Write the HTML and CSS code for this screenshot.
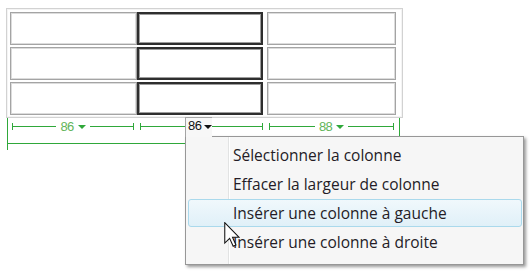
FILE: index.html
```html
<!DOCTYPE html>
<html lang="fr">
<head>
<meta charset="utf-8">
<title>Colonne</title>
<link rel="stylesheet" href="styles.css">
</head>
<body>
<div class="page">
  <div class="tbl">
    <div class="row"><div class="cell c1"></div><div class="cell c2"></div><div class="cell c3"></div></div>
    <div class="row"><div class="cell c1"></div><div class="cell c2"></div><div class="cell c3"></div></div>
    <div class="row"><div class="cell c1"></div><div class="cell c2"></div><div class="cell c3"></div></div>
  </div>
  <div class="ruler">
    <div class="ruler-body">
      <div class="seg s1"><span class="tick"></span><span class="line"></span><span class="lbl">86<i class="arr"></i></span><span class="line"></span><span class="tick"></span></div>
      <div class="seg s2"><span class="tick"></span><span class="line"></span><span class="tick"></span></div>
      <div class="seg s3"><span class="tick"></span><span class="line"></span><span class="lbl">88<i class="arr"></i></span><span class="line"></span><span class="tick"></span></div>
    </div>
  </div>

  <div class="menu">
    <div class="item">Sélectionner la colonne</div>
    <div class="item">Effacer la largeur de colonne</div>
    <div class="item hot">Insérer une colonne à gauche</div>
    <div class="item">Insérer une colonne à droite</div>
  </div>
  <div class="tab">86<i class="arr dark"></i></div>

  <svg class="cursor" width="16" height="25" viewBox="0 0 12 19" xmlns="http://www.w3.org/2000/svg">
    <path d="M0.5 0.5 L0.5 16 L4.2 12.4 L6.9 18.4 L9 17.5 L6.4 11.6 L11.4 11.6 Z" fill="#fff" stroke="#111" stroke-width="0.8" stroke-linejoin="miter"/>
  </svg>
</div>
</body>
</html>
```
FILE: styles.css
```css
html, body {
  margin: 0;
  padding: 0;
  background: #ffffff;
}
.page {
  position: relative;
  width: 531px;
  height: 271px;
  overflow: hidden;
  padding-top: 8px;
  box-sizing: border-box;
  font-family: "Open Sans", "Noto Sans", sans-serif;
}
.tbl {
  margin-left: 6px;
  width: 390px;
  border: 1px solid #d2d2d2;
  box-shadow: inset 0 0 0 1px #f4f4f4;
  padding: 3px 2px 2px 3px;
  display: flex;
  flex-direction: column;
  gap: 2px;
}
.row {
  display: flex;
  height: 33px;
}
.cell {
  box-sizing: border-box;
  height: 33px;
  border: 1px solid #a4a4a4;
  box-shadow: inset 0 0 0 1px #dcdcdc;
  background: #fff;
}
.c1 { width: 127px; }
.c2 {
  width: 126px;
  border: 2px solid #2e2e2e;
  box-shadow: inset 0 0 0 1px #9c9c9c;
}
.c3 { width: 129px; margin-left: 4px; }

.ruler {
  margin-left: 7px;
  width: 392px;
  border-left: 1px solid #2fa83a;
  padding-bottom: 6px;
}
.ruler-body {
  height: 26px;
  border-right: 1px solid #2fa83a;
  border-bottom: 1px solid #2fa83a;
  display: flex;
  align-items: flex-start;
  padding-top: 5px;
  box-sizing: border-box;
}
.seg {
  display: flex;
  align-items: center;
  height: 7px;
}
.s1 { margin-left: 4px; width: 122px; }
.s2 { margin-left: 6px; width: 123px; }
.s3 { margin-left: 6px; width: 125px; }
.tick {
  width: 1px;
  height: 7px;
  background: #2fa83a;
}
.line {
  flex: 1;
  height: 1px;
  background: #2fa83a;
}
.lbl {
  display: flex;
  align-items: center;
  gap: 4px;
  margin: 0 4px;
  font-family: "Liberation Sans", Arial, sans-serif;
  font-size: 13px;
  line-height: 10px;
  letter-spacing: -0.6px;
  color: #62b55a;
}
.arr {
  display: inline-block;
  width: 0;
  height: 0;
  border-left: 4px solid transparent;
  border-right: 4px solid transparent;
  border-top: 4px solid #2fa83a;
}
.arr.dark { border-top-color: #111; }

.tab {
  position: absolute;
  left: 185px;
  top: 117px;
  width: 27px;
  height: 20px;
  box-sizing: border-box;
  border-top: 1px solid #a4a4a4;
  border-left: 1px solid #a4a4a4;
  background: #f7f7f7;
  padding: 2px 0 0 2px;
  display: flex;
  align-items: flex-start;
  gap: 3px;
  font-family: "Liberation Sans", Arial, sans-serif;
  font-size: 13px;
  line-height: 12px;
  letter-spacing: -0.6px;
  color: #111;
}
.tab .arr { margin-top: 5px; }

.menu {
  position: absolute;
  left: 185px;
  top: 136px;
  width: 339px;
  box-sizing: border-box;
  border: 1px solid #979797;
  background: #f6f6f6;
  box-shadow: 2px 2px 3px rgba(0, 0, 0, 0.4);
  padding: 4px 1px 8px 2px;
  display: flex;
  flex-direction: column;
  gap: 1px;
}
.menu::before {
  content: "";
  position: absolute;
  left: 42px;
  top: 0;
  bottom: 0;
  width: 1px;
  background: #e2e3e3;
  box-shadow: 1px 0 0 #ffffff;
}
.item {
  position: relative;
  height: 28px;
  box-sizing: border-box;
  border: 1px solid transparent;
  border-radius: 3px;
  padding-left: 44px;
  font-size: 15.5px;
  line-height: 26px;
  color: #241c26;
}
.item.hot {
  border-color: #aad9ec;
  background: linear-gradient(#f0f8fc, #e0f0f8);
}
.cursor {
  position: absolute;
  left: 224px;
  top: 222px;
}
```
